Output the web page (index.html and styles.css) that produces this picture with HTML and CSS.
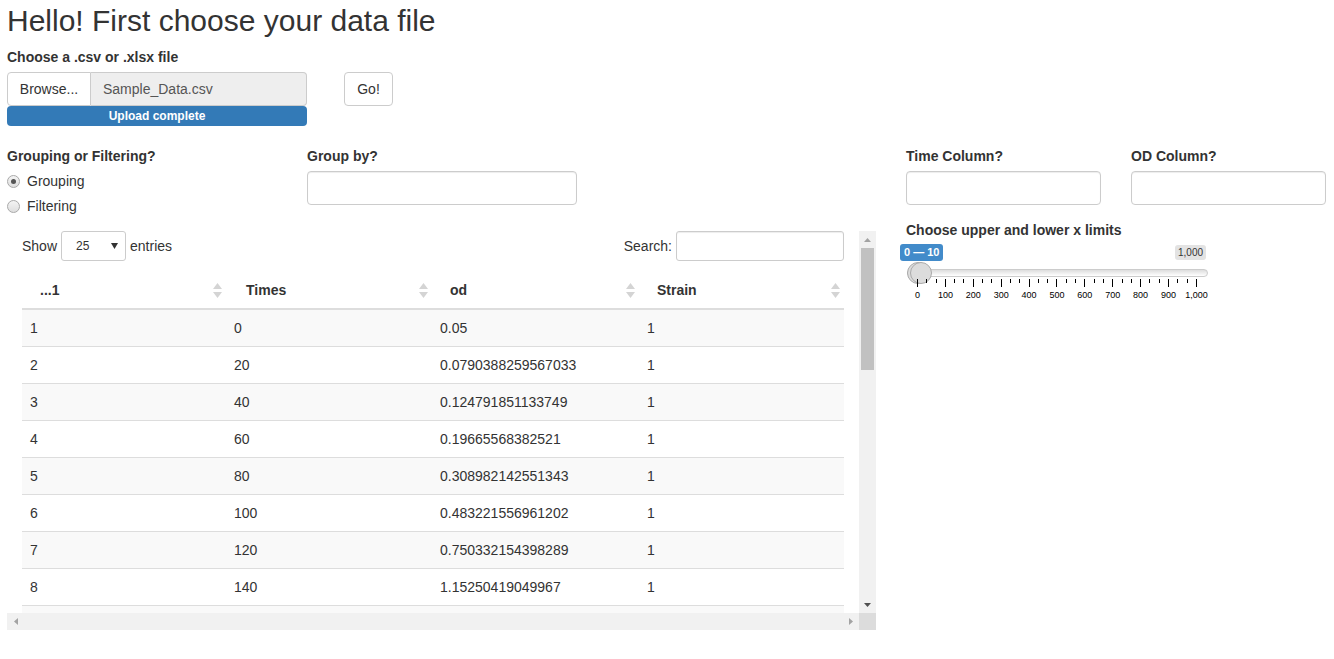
FILE: index.html
```html
<!DOCTYPE html>
<html>
<head>
<meta charset="utf-8">
<link rel="stylesheet" href="styles.css">
</head>
<body>
<div class="page">
  <h2 class="title">Hello! First choose your data file</h2>
  <div class="upload-row">
    <div class="upload">
      <label class="lbl">Choose a .csv or .xlsx file</label>
      <div class="file-group">
        <span class="btn browse">Browse...</span>
        <span class="file-name">Sample_Data.csv</span>
      </div>
      <div class="progress">Upload complete</div>
    </div>
    <span class="btn go">Go!</span>
  </div>

  <div class="main">
    <div class="left">
      <div class="controls">
        <div class="col-radio">
          <label class="lbl">Grouping or Filtering?</label>
          <div class="radio"><span class="dot checked"></span><span>Grouping</span></div>
          <div class="radio second"><span class="dot"></span><span>Filtering</span></div>
        </div>
        <div class="col-group">
          <label class="lbl">Group by?</label>
          <div class="input group-input"></div>
        </div>
      </div>

      <div class="dt">
        <div class="dt-content">
          <div class="dt-top">
            <div class="dt-length">
              <span>Show</span>
              <div class="select"><span>25</span><svg width="7" height="6" viewBox="0 0 7 6"><path d="M0 0 L7 0 L3.5 6 Z" fill="#333"/></svg></div>
              <span>entries</span>
            </div>
            <div class="dt-search">
              <span>Search:</span>
              <div class="input search-input"></div>
            </div>
          </div>
          <table class="tbl">
            <colgroup><col class="c1"><col class="c2"><col class="c3"><col class="c4"></colgroup>
            <thead>
              <tr>
                <th><div class="th-in"><span>...1</span><svg class="sort" width="9" height="15" viewBox="0 0 9 15"><path d="M4.5 0 L9 6 L0 6 Z" fill="#d4d4d4"/><path d="M0 9 L9 9 L4.5 15 Z" fill="#d4d4d4"/></svg></div></th>
                <th class="pad2"><div class="th-in"><span>Times</span><svg class="sort" width="9" height="15" viewBox="0 0 9 15"><path d="M4.5 0 L9 6 L0 6 Z" fill="#d4d4d4"/><path d="M0 9 L9 9 L4.5 15 Z" fill="#d4d4d4"/></svg></div></th>
                <th><div class="th-in"><span>od</span><svg class="sort" width="9" height="15" viewBox="0 0 9 15"><path d="M4.5 0 L9 6 L0 6 Z" fill="#d4d4d4"/><path d="M0 9 L9 9 L4.5 15 Z" fill="#d4d4d4"/></svg></div></th>
                <th><div class="th-in"><span>Strain</span><svg class="sort" width="9" height="15" viewBox="0 0 9 15"><path d="M4.5 0 L9 6 L0 6 Z" fill="#d4d4d4"/><path d="M0 9 L9 9 L4.5 15 Z" fill="#d4d4d4"/></svg></div></th>
              </tr>
            </thead>
            <tbody>
              <tr><td>1</td><td>0</td><td>0.05</td><td>1</td></tr>
              <tr><td>2</td><td>20</td><td>0.0790388259567033</td><td>1</td></tr>
              <tr><td>3</td><td>40</td><td>0.124791851133749</td><td>1</td></tr>
              <tr><td>4</td><td>60</td><td>0.19665568382521</td><td>1</td></tr>
              <tr><td>5</td><td>80</td><td>0.308982142551343</td><td>1</td></tr>
              <tr><td>6</td><td>100</td><td>0.483221556961202</td><td>1</td></tr>
              <tr><td>7</td><td>120</td><td>0.750332154398289</td><td>1</td></tr>
              <tr><td>8</td><td>140</td><td>1.15250419049967</td><td>1</td></tr>
              <tr class="partial"><td></td><td></td><td></td><td></td></tr>
            </tbody>
          </table>
        </div>
        <div class="vbar">
          <div class="sb-btn"><svg width="7" height="4" viewBox="0 0 7 4"><path d="M3.5 0 L7 4 L0 4 Z" fill="#a3a3a3"/></svg></div>
          <div class="vtrack"><div class="vthumb"></div></div>
          <div class="sb-btn"><svg width="7" height="4" viewBox="0 0 7 4"><path d="M0 0 L7 0 L3.5 4 Z" fill="#505050"/></svg></div>
        </div>
        <div class="hbar">
          <div class="sb-btn"><svg width="4" height="7" viewBox="0 0 4 7"><path d="M4 0 L4 7 L0 3.5 Z" fill="#a3a3a3"/></svg></div>
          <div class="htrack"></div>
          <div class="sb-btn"><svg width="4" height="7" viewBox="0 0 4 7"><path d="M0 0 L4 3.5 L0 7 Z" fill="#a3a3a3"/></svg></div>
        </div>
        <div class="corner"></div>
      </div>
    </div>

    <div class="right">
      <div class="fields">
        <div class="field">
          <label class="lbl">Time Column?</label>
          <div class="input"></div>
        </div>
        <div class="field">
          <label class="lbl">OD Column?</label>
          <div class="input"></div>
        </div>
      </div>
      <label class="lbl slider-lbl">Choose upper and lower x limits</label>
      <div class="slider">
        <span class="irs-from">0 — 10</span>
        <span class="irs-max">1,000</span>
        <div class="irs-line"></div>
        <span class="handle h1"></span>
        <span class="handle h2"></span>
        <div class="grid">
          <div class="ticks">
            <i class="big"></i><i></i><i></i>
            <i class="big"></i><i></i><i></i>
            <i class="big"></i><i></i><i></i>
            <i class="big"></i><i></i><i></i>
            <i class="big"></i><i></i><i></i>
            <i class="big"></i><i></i><i></i>
            <i class="big"></i><i></i><i></i>
            <i class="big"></i><i></i><i></i>
            <i class="big"></i><i></i><i></i>
            <i class="big"></i><i></i><i></i>
            <i class="big"></i>
          </div>
          <div class="gtext">
            <span><b>0</b></span><span><b>100</b></span><span><b>200</b></span><span><b>300</b></span><span><b>400</b></span><span><b>500</b></span><span><b>600</b></span><span><b>700</b></span><span><b>800</b></span><span><b>900</b></span><span><b>1,000</b></span>
          </div>
        </div>
      </div>
    </div>
  </div>
</div>
</body>
</html>
```

FILE: styles.css
```css
* { box-sizing: border-box; }
html, body { margin: 0; padding: 0; background: #fff; }
body {
  font-family: "Liberation Sans", Arial, sans-serif;
  font-size: 14px;
  line-height: 20px;
  color: #333;
}
.page { padding: 0 8px 0 7px; }

.title {
  margin: 0 0 7px;
  padding-top: 2px;
  height: 40px;
  font-size: 30px;
  line-height: 38px;
  font-weight: normal;
  color: #333;
}

.lbl {
  display: block;
  font-weight: bold;
  line-height: 20px;
  margin-bottom: 5px;
}

.upload-row { display: flex; align-items: flex-start; }
.upload { width: 300px; }
.file-group { display: flex; height: 34px; }
.btn {
  display: inline-flex;
  align-items: center;
  justify-content: center;
  height: 34px;
  border: 1px solid #ccc;
  background: #fff;
  color: #333;
}
.browse { width: 84px; border-radius: 4px 0 0 4px; }
.file-name {
  flex: 1;
  display: flex;
  align-items: center;
  padding-left: 12px;
  background: #eee;
  border: 1px solid #ccc;
  border-left: none;
  border-radius: 0 4px 4px 0;
  color: #555;
}
.progress {
  height: 20px;
  background: #337ab7;
  color: #fff;
  border-radius: 4px;
  font-size: 12px;
  font-weight: bold;
  line-height: 20px;
  text-align: center;
}
.go { width: 49px; margin-left: 37px; margin-top: 25px; border-radius: 4px; }

.main { display: flex; margin-top: 20px; align-items: flex-start; }
.left { width: 869px; }
.right { width: 420px; margin-left: 30px; }

.controls { display: flex; }
.col-radio { width: 300px; }
.col-group { width: 270px; }
.radio { display: flex; align-items: center; height: 20px; }
.radio.second { margin-top: 5px; }
.dot {
  width: 13px; height: 13px;
  border-radius: 50%;
  border: 1px solid #a9a9a9;
  background: linear-gradient(#f4f4f4, #dedede);
  margin-right: 7px;
  display: flex; align-items: center; justify-content: center;
}
.dot.checked::after {
  content: "";
  width: 5px; height: 5px; border-radius: 50%;
  background: #555;
}

.input {
  height: 34px;
  border: 1px solid #ccc;
  border-radius: 4px;
  background: #fff;
  box-shadow: inset 0 1px 1px rgba(0,0,0,.075);
}
.group-input { width: 270px; }

.dt {
  margin-top: 15px;
  display: grid;
  grid-template-columns: 852px 17px;
  grid-template-rows: 382px 17px;
}
.dt-content { overflow: hidden; padding: 0 15px; }
.dt-top { display: flex; justify-content: space-between; height: 30px; }
.dt-length, .dt-search { display: flex; align-items: center; }
.select {
  width: 65px; height: 30px;
  margin: 0 4px;
  border: 1px solid #ccc;
  border-radius: 3px;
  display: flex; align-items: center; justify-content: space-between;
  padding: 0 7px 0 14px;
  font-size: 12px;
}
.dt-search span { margin-right: 4px; }
.search-input { width: 168px; height: 30px; border-radius: 3px; }

.tbl {
  margin-top: 11px;
  width: 822px;
  border-collapse: collapse;
  table-layout: fixed;
}
.c1 { width: 204px; } .c2 { width: 206px; } .c3 { width: 207px; } .c4 { width: 205px; }
.tbl th {
  padding: 8px 4px 8px 18px;
  text-align: left;
  font-weight: bold;
  border-bottom: 2px solid #ddd;
}
.tbl th.pad2 { padding-left: 20px; }
.th-in { display: flex; justify-content: space-between; align-items: center; height: 20px; }
.tbl td {
  padding: 8px;
  height: 36px;
  border-top: 1px solid #ddd;
  line-height: 20px;
  white-space: nowrap;
}
.tbl tbody tr:nth-child(odd) { background: #f9f9f9; }

.vbar { display: flex; flex-direction: column; background: #f1f1f1; }
.sb-btn { width: 17px; height: 17px; display: flex; align-items: center; justify-content: center; flex: none; }
.vtrack { flex: 1; padding: 0 2px; }
.vthumb { height: 122px; background: #c1c1c1; }
.hbar { display: flex; background: #f1f1f1; }
.htrack { flex: 1; }
.corner { background: #dcdcdc; }

.fields { display: flex; gap: 30px; margin-bottom: 15px; }
.field { width: 195px; }
.slider-lbl { margin-bottom: 0; }

.slider {
  position: relative;
  width: 312px;
  height: 62px;
  margin-left: -6px;
}
.irs-from {
  position: absolute;
  left: 0; top: 4px;
  height: 17px;
  padding: 0 4px;
  background: #428bca;
  color: #fff;
  border-radius: 3px;
  font-size: 11px;
  font-weight: bold;
  line-height: 17px;
}
.irs-max {
  position: absolute;
  left: 275px; top: 5px;
  height: 15px;
  padding: 0 3px;
  background: #e3e3e3;
  color: #333;
  border-radius: 3px;
  font-size: 10px;
  line-height: 15px;
}
.irs-line {
  position: absolute;
  left: 7px; top: 29px;
  width: 301px; height: 8px;
  border: 1px solid #ccc;
  border-radius: 16px;
  background: linear-gradient(#dddddd, #ffffff);
}
.handle {
  position: absolute;
  top: 22px;
  width: 22px; height: 22px;
  border-radius: 50%;
  border: 1px solid #aaa;
  background: #dcdcdc;
}
.h1 { left: 7px; }
.h2 { left: 10px; }
.grid {
  position: absolute;
  left: 17px; top: 39px;
  width: 280px;
}
.ticks { display: flex; justify-content: space-between; align-items: flex-start; height: 8px; }
.ticks i { display: block; width: 1px; height: 4px; background: #000; }
.ticks i.big { height: 8px; }
.gtext { display: flex; justify-content: space-between; margin-top: 3px; height: 10px; }
.gtext span { width: 1px; display: flex; justify-content: center; }
.gtext b { font-weight: normal; font-size: 9px; line-height: 10px; color: #000; white-space: nowrap; }
```
